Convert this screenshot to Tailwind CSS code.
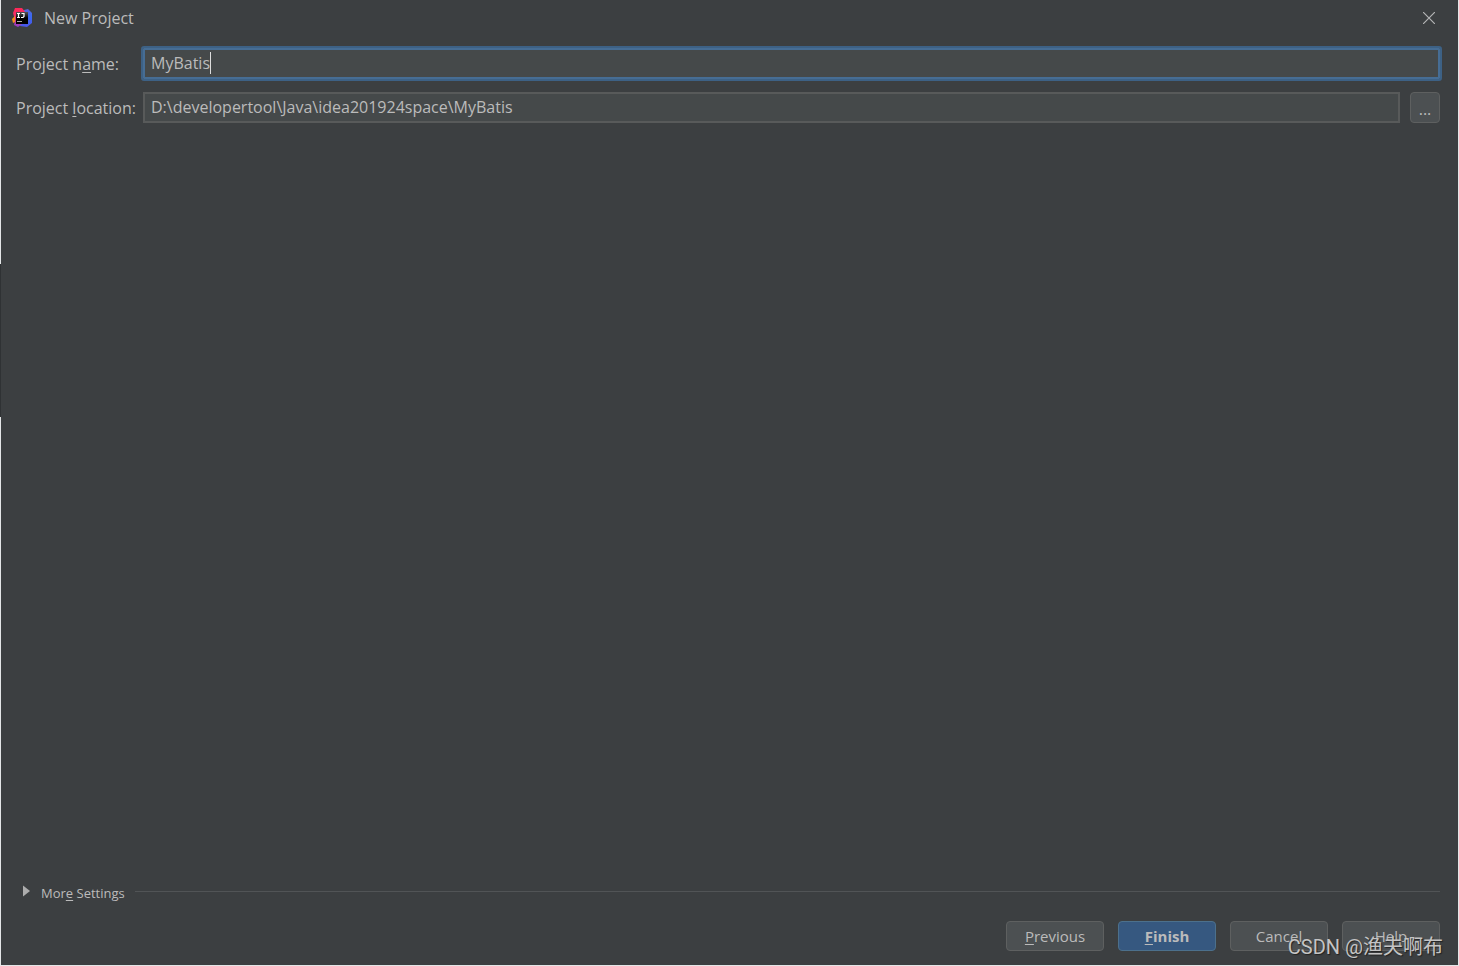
<!DOCTYPE html>
<html lang="en">
<head>
<meta charset="utf-8">
<title>New Project</title>
<script src="https://cdn.jsdelivr.net/npm/@tailwindcss/browser@4"></script>
</head>
<body class="bg-[#e4e6e7] font-['Open_Sans','Noto_Sans_CJK_SC',sans-serif] text-[#bbbbbb]">
<div class="relative min-h-screen px-px pb-px flex flex-col">
  <div class="absolute left-0 top-[264px] w-px h-[153px] bg-[#2f3234]"></div>
  <main class="flex-1 flex flex-col bg-[#3c3f41]">
    <header class="flex items-center h-9 pl-[11px] pr-[23px]">
      <svg class="size-5 mr-3" viewBox="0 0 20 20" aria-hidden="true">
        <defs>
          <linearGradient id="a" x1="0" y1="0" x2="0" y2="1"><stop offset="0" stop-color="#fe2857"/><stop offset=".45" stop-color="#f0306a"/><stop offset="1" stop-color="#8a3fd0"/></linearGradient>
          <linearGradient id="b" x1="0" y1="0" x2="0" y2="1"><stop offset="0" stop-color="#5a62d8"/><stop offset=".4" stop-color="#3a6af0"/><stop offset="1" stop-color="#4a55e8"/></linearGradient>
          <linearGradient id="c" x1="0" y1="0" x2="0" y2="1"><stop offset="0" stop-color="#555"/><stop offset=".5" stop-color="#000"/></linearGradient>
        </defs>
        <path d="M12 2l4-1 4 4v10l-5 4-7-1z" fill="url(#b)"/>
        <path d="M3 0h7l4 5-4 11-4 3-4-2 1-5-2-7z" fill="url(#a)"/>
        <path d="M0 11l3-3v6l-2 1z" fill="#f88c1c"/>
        <rect x="4" y="4" width="12" height="12" fill="url(#c)"/>
        <path d="M5 5.500h3M6.500 5.500v4M5 9.500h3M9.500 5.500h2.500v3l-1 1h-2" fill="none" stroke="#fff" stroke-width="1.200"/>
        <path d="M5 13.500h5" stroke="#aaa" stroke-width="1"/>
      </svg>
      <h1 class="flex-1 text-base leading-5">New Project</h1>
      <button aria-label="Close" class="size-3 flex"><svg class="size-3" viewBox="0 0 12 12" fill="none" stroke="#b4b5b6" stroke-width="1.200"><path d="M0 0l12 12M12 0L0 12"/></svg></button>
    </header>

    <form class="flex-1 flex flex-col pl-[15px] pr-[18px] pt-3">
      <div class="grid grid-cols-[127px_1fr] gap-y-[13px] items-center text-base leading-5">
        <label for="name">Project n<span class="underline underline-offset-2">a</span>me:</label>
        <div class="relative flex">
          <input id="name" type="text" value="MyBatis" class="w-full h-[31px] px-1.5 pb-px bg-[#45494a] border-2 border-[#466d94] outline-2 outline-[#3d6185] rounded-[1px]">
          <span class="absolute left-[67px] top-1 w-px h-[22px] bg-[#dddddd]"></span>
        </div>
        <label for="location">Project <span class="underline underline-offset-2">l</span>ocation:</label>
        <div class="flex gap-2.5">
          <input id="location" type="text" value="D:\developertool\Java\idea201924space\MyBatis" class="flex-1 min-w-0 h-[31px] px-1.5 pb-px bg-[#45494a] border-2 border-[#585a5a]">
          <button type="button" aria-label="Browse" class="w-[30px] h-[31px] bg-[#4c5052] border border-[#5e6060] rounded text-base leading-5 pt-0.5">...</button>
        </div>
      </div>

      <div class="mt-auto flex items-center pl-[7px] text-[13px] leading-5">
        <button type="button" class="flex items-center shrink-0 mr-2.5">
          <svg class="w-[7px] h-3 mr-[11px] -mt-1" viewBox="0 0 7 12" fill="#adadad"><path d="M0 0.500l7 5.500-7 5.500z"/></svg>
          <span>Mor<span class="underline underline-offset-2">e</span> Settings</span>
        </button>
        <div class="flex-1 h-px bg-[#515456] -mt-1"></div>
      </div>

      <footer class="flex justify-end gap-3.5 pt-[18px] pb-3.5 text-[15px] leading-5">
        <button type="button" class="w-[98px] h-[30px] bg-[#4c5052] border border-[#5e6060] rounded"><span class="underline underline-offset-2">P</span>revious</button>
        <button type="submit" class="w-[98px] h-[30px] bg-[#365880] border border-[#4c708c] rounded font-bold"><span class="underline underline-offset-2">F</span>inish</button>
        <button type="button" class="w-[98px] h-[30px] bg-[#4c5052] border border-[#5e6060] rounded">Cancel</button>
        <button type="button" class="w-[98px] h-[30px] bg-[#4c5052] border border-[#5e6060] rounded">Help</button>
      </footer>
    </form>
  </main>
  <div class="absolute right-4 bottom-[5px] pointer-events-none font-['Roboto','Noto_Sans_CJK_SC',sans-serif] text-[20px] leading-7 text-[#c4c4c4] text-shadow-[1px_1px_1px_#222]">CSDN @渔夫啊布</div>
</div>
</body>
</html>
